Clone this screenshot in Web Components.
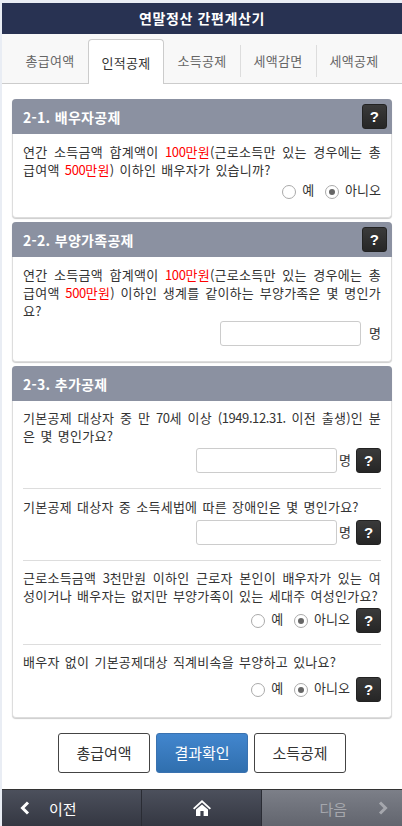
<!DOCTYPE html>
<html lang="ko">
<head>
<meta charset="utf-8">
<title>연말정산 간편계산기</title>
<style>
    html, body { margin: 0; height: 100%; background: #fff; }
    body {
        width: 402px;
        height: 826px;
        overflow: hidden;
        box-sizing: border-box;
        padding: 3px 0 0 2px;
        background: #e9edf4;
        font-family: "Noto Sans CJK KR", "Liberation Sans", sans-serif;
        font-size: 13px;
        color: #333;
    }
    .red { color: #f00; }
    .num { letter-spacing: -0.4px; }
</style>
</head>
<body>
<tax-app>
    <tax-header slot="header">연말정산 간편계산기</tax-header>
    <tax-tabs slot="tabs"></tax-tabs>
    <tax-panel title="2-1. 배우자공제" help first>
        <tax-question kind="radio" style="--top:9px;--gap:1px;--bottom:14px;--ctrl:23px">연간 소득금액 합계액이 <span class="red"><span class="num">100</span>만원</span>(근로소득만 있는 경우에는 총급여액 <span class="red"><span class="num">500</span>만원</span>) 이하인 배우자가 있습니까?</tax-question>
    </tax-panel>
    <tax-panel title="2-2. 부양가족공제" help>
        <tax-question kind="input" style="--top:9px;--gap:1px;--bottom:15px">연간 소득금액 합계액이 <span class="red"><span class="num">100</span>만원</span>(근로소득만 있는 경우에는 총급여액 <span class="red"><span class="num">500</span>만원</span>) 이하인 생계를 같이하는 부양가족은 몇 명인가요?</tax-question>
    </tax-panel>
    <tax-panel title="2-3. 추가공제">
        <tax-question kind="input" help style="--top:8px;--gap:3px;--bottom:15px">기본공제 대상자 중 만 <span class="num">70</span>세 이상 <span class="num">(1949.12.31.</span> 이전 출생)인 분은 몇 명인가요?</tax-question>
        <tax-question kind="input" help style="--top:9px;--gap:4px;--bottom:15px">기본공제 대상자 중 소득세법에 따른 장애인은 몇 명인가요?</tax-question>
        <tax-question kind="radio" help style="--top:8px;--gap:3px;--bottom:11px">근로소득금액 <span class="num">3</span>천만원 이하인 근로자 본인이 배우자가 있는 여성이거나 배우자는 없지만 부양가족이 있는 세대주 여성인가요?</tax-question>
        <tax-question kind="radio" help style="--top:8px;--gap:6px;--bottom:15px">배우자 없이 기본공제대상 직계비속을 부양하고 있나요?</tax-question>
    </tax-panel>
    <tax-actions></tax-actions>
    <tax-footer></tax-footer>
</tax-app>
<script>
const HELP = `
    .help {
        width: 25px;
        height: 25px;
        box-sizing: border-box;
        flex: none;
        border: 1px solid #222;
        border-radius: 3px;
        background: linear-gradient(#3a3a3a, #262626);
        color: #fff;
        font: bold 15px/23px "Liberation Sans", sans-serif;
        text-align: center;
    }
`;

class TaxApp extends HTMLElement {
    constructor() {
        super();
        this.attachShadow({ mode: 'open' });
    }
    connectedCallback() {
        this.shadowRoot.innerHTML = `
        <style>
            :host { display: block; background: #fff; height: 823px; }
        </style>
        <slot name="header"></slot>
        <slot name="tabs"></slot>
        <slot></slot>
        `;
    }
}

class TaxHeader extends HTMLElement {
    constructor() {
        super();
        this.attachShadow({ mode: 'open' });
    }
    connectedCallback() {
        this.shadowRoot.innerHTML = `
        <style>
            :host {
                display: block;
                height: 31px;
                background: #283252;
                color: #fff;
                font-size: 14px;
                font-weight: bold;
                letter-spacing: 0.6px;
                line-height: 31px;
                text-align: center;
            }
        </style>
        <slot></slot>
        `;
    }
}

class TaxTabs extends HTMLElement {
    constructor() {
        super();
        this.attachShadow({ mode: 'open' });
    }
    connectedCallback() {
        const names = ['총급여액', '인적공제', '소득공제', '세액감면', '세액공제'];
        this.shadowRoot.innerHTML = `
        <style>
            :host {
                display: flex;
                height: 50px;
                box-sizing: border-box;
                padding: 5px 0 0 10px;
                background: #f8f8f8;
                border-bottom: 1px solid #ccc;
            }
            .tab {
                width: 76px;
                height: 44px;
                box-sizing: border-box;
                text-align: center;
                line-height: 43px;
                font-size: 13px;
                letter-spacing: 0.3px;
                color: #666;
                position: relative;
            }
            .tab.on {
                height: 45px;
                background: #fff;
                border: 1px solid #ccc;
                border-bottom: 0;
                border-radius: 4px 4px 0 0;
                color: #333;
                line-height: 45px;
            }
            .tab.sep::before {
                content: "";
                position: absolute;
                left: 0;
                top: 6px;
                height: 32px;
                border-left: 1px solid #ddd;
            }
        </style>
        ${names.map((n, i) => `<div class="tab ${i === 1 ? 'on' : ''} ${i > 2 ? 'sep' : ''}">${n}</div>`).join('')}
        `;
    }
}

class TaxPanel extends HTMLElement {
    constructor() {
        super();
        this.attachShadow({ mode: 'open' });
    }
    connectedCallback() {
        const help = this.hasAttribute('help') ? '<div class="help">?</div>' : '';
        this.shadowRoot.innerHTML = `
        <style>
            :host {
                display: block;
                margin: 4px 10px 0;
                background: #fff;
                border: 1px solid #ddd;
                border-top: 0;
                border-radius: 4px;
                box-shadow: 0 1px 1px rgba(0, 0, 0, 0.2);
            }
            :host([first]) { margin-top: 15px; }
            .head {
                display: flex;
                align-items: center;
                justify-content: space-between;
                height: 35px;
                margin: 0 -1px;
                padding: 0 5px 0 11px;
                box-sizing: border-box;
                background: #8b91a1;
                border-radius: 4px 4px 0 0;
                color: #fff;
                font-size: 14px;
                font-weight: bold;
                letter-spacing: 0.3px;
            }
            .body { padding: 0 10px; }
            ${HELP}
        </style>
        <div class="head"><span>${this.getAttribute('title')}</span>${help}</div>
        <div class="body"><slot></slot></div>
        `;
    }
}

class TaxQuestion extends HTMLElement {
    constructor() {
        super();
        this.attachShadow({ mode: 'open' });
    }
    connectedCallback() {
        const help = this.hasAttribute('help') ? '<div class="help">?</div>' : '';
        const control = this.getAttribute('kind') === 'input'
            ? `<div class="field"></div><span class="unit">명</span>`
            : `<span class="radio"></span><span class="lab">예</span>
               <span class="radio on"></span><span class="lab">아니오</span>`;
        this.shadowRoot.innerHTML = `
        <style>
            :host {
                display: block;
                padding: var(--top, 8px) 0 var(--bottom, 15px);
                border-top: 1px solid #ddd;
                font-size: 13px;
                line-height: 18px;
                letter-spacing: 0.25px;
                word-spacing: 1.3px;
                color: #333;
            }
            :host(:first-child) { border-top: 0; }
            .text {
                text-align: justify;
                word-break: break-all;
            }
            .ctrl {
                display: flex;
                align-items: center;
                justify-content: flex-end;
                height: var(--ctrl, 25px);
                margin-top: var(--gap, 3px);
                gap: 5px;
                letter-spacing: 0;
            }
            .field {
                width: 141px;
                height: 25px;
                box-sizing: border-box;
                border: 1px solid #ccc;
                border-radius: 3px;
                background: #fff;
            }
            :host([help]) .field { margin-right: -3px; }
            .unit { margin-bottom: 2px; }
            :host([kind="input"]:not([help])) .unit { margin-left: 3px; }
            .radio {
                width: 14px;
                height: 14px;
                box-sizing: border-box;
                border: 1px solid #aaa;
                border-radius: 50%;
                background: #fff;
                position: relative;
            }
            .radio.on::after {
                content: "";
                position: absolute;
                left: 3px;
                top: 3px;
                width: 6px;
                height: 6px;
                border-radius: 50%;
                background: #666;
            }
            .lab { margin: 0 6px 3px 1px; }
            .lab:last-of-type { margin-right: 0; }
            .lab:last-of-type + .help { margin-left: 1px; }
            ${HELP}
        </style>
        <div class="text"><slot></slot></div>
        <div class="ctrl">${control}${help}</div>
        `;
    }
}

class TaxActions extends HTMLElement {
    constructor() {
        super();
        this.attachShadow({ mode: 'open' });
    }
    connectedCallback() {
        this.shadowRoot.innerHTML = `
        <style>
            :host {
                display: flex;
                justify-content: center;
                gap: 6px;
                padding: 15px 0 16px;
            }
            .btn {
                width: 92px;
                height: 40px;
                box-sizing: border-box;
                border: 1px solid #444;
                border-radius: 3px;
                background: #fff;
                color: #333;
                font-size: 15px;
                line-height: 38px;
                text-align: center;
            }
            .btn.primary {
                border-color: #3a72b0;
                background: linear-gradient(#4286ce, #306fae);
                color: #fff;
            }
        </style>
        <div class="btn">총급여액</div>
        <div class="btn primary">결과확인</div>
        <div class="btn">소득공제</div>
        `;
    }
}

class TaxFooter extends HTMLElement {
    constructor() {
        super();
        this.attachShadow({ mode: 'open' });
    }
    connectedCallback() {
        this.shadowRoot.innerHTML = `
        <style>
            :host {
                display: flex;
                height: 37px;
                box-sizing: border-box;
                border-top: 1px solid #333;
                background: linear-gradient(#4c505c, #343742);
                color: #fff;
                font-size: 15px;
            }
            .cell { display: flex; align-items: center; box-sizing: border-box; }
            .prev { width: 140px; padding-left: 18px; gap: 19px; border-right: 1px solid #2a2c34; }
            .home { width: 120px; justify-content: center; border-right: 1px solid #2a2c34; }
            .next {
                flex: 1;
                justify-content: flex-end;
                gap: 31px;
                padding-right: 14px;
                background: linear-gradient(#7c7f88, #62656e);
                color: #a5a7ad;
            }
        </style>
        <div class="cell prev">
            <svg width="10" height="14" viewBox="0 0 10 14"><path d="M8 1.5 2.500 7 8 12.5" fill="none" stroke="#fff" stroke-width="3"/></svg>
            <span>이전</span>
        </div>
        <div class="cell home">
            <svg width="18" height="16" viewBox="0 0 18 16"><path fill="#fff" d="M9 0 18 8.2 16.7 9.400 9 2.600 1.300 9.400 0 8.200zM3 9.600 9 4.400 15 9.600V16H10.600V11H7.400V16H3z"/></svg>
        </div>
        <div class="cell next">
            <span>다음</span>
            <svg width="10" height="14" viewBox="0 0 10 14"><path d="M2 1.5 7.500 7 2 12.5" fill="none" stroke="#a5a7ad" stroke-width="3"/></svg>
        </div>
        `;
    }
}

customElements.define('tax-app', TaxApp);
customElements.define('tax-header', TaxHeader);
customElements.define('tax-tabs', TaxTabs);
customElements.define('tax-panel', TaxPanel);
customElements.define('tax-question', TaxQuestion);
customElements.define('tax-actions', TaxActions);
customElements.define('tax-footer', TaxFooter);
</script>
</body>
</html>
